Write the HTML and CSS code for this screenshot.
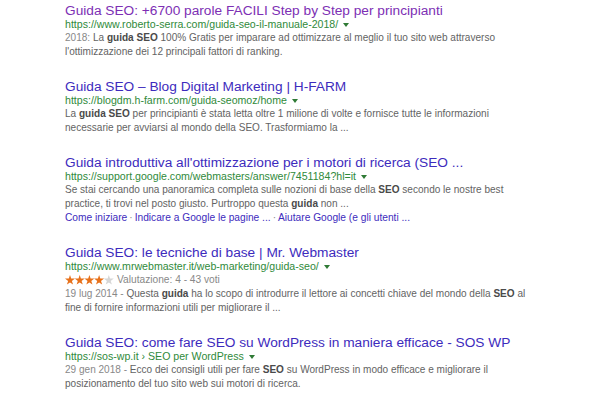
FILE: index.html
```html
<!DOCTYPE html>
<html lang="it">
<head>
    <meta charset="UTF-8">
    <meta name="viewport" content="width=device-width, initial-scale=1.0">
    <title>guida seo - Cerca con Google</title>
    <link rel="stylesheet" href="styles.css">
</head>
<body>
    <div class="results">
        <div class="result">
            <a class="title visited" href="#">Guida SEO: +6700 parole FACILI Step by Step per principianti</a>
            <div class="url">https://www.roberto-serra.com/guida-seo-il-manuale-2018/<span class="arrow"></span></div>
            <p class="snippet"><span class="date">2018:</span> La <b>guida SEO</b> 100% Gratis per imparare ad ottimizzare al meglio il tuo sito web attraverso<br>l'ottimizzazione dei 12 principali fattori di ranking.</p>
        </div>

        <div class="result">
            <a class="title" href="#">Guida SEO – Blog Digital Marketing | H-FARM</a>
            <div class="url">https://blogdm.h-farm.com/guida-seomoz/home<span class="arrow"></span></div>
            <p class="snippet">La <b>guida SEO</b> per principianti è stata letta oltre 1 milione di volte e fornisce tutte le informazioni<br>necessarie per avviarsi al mondo della SEO. Trasformiamo la ...</p>
        </div>

        <div class="result">
            <a class="title" href="#">Guida introduttiva all'ottimizzazione per i motori di ricerca (SEO ...</a>
            <div class="url">https://support.google.com/webmasters/answer/7451184?hl=it<span class="arrow"></span></div>
            <p class="snippet">Se stai cercando una panoramica completa sulle nozioni di base della <b>SEO</b> secondo le nostre best<br>practice, ti trovi nel posto giusto. Purtroppo questa <b>guida</b> non ...</p>
            <div class="sitelinks">
                <a href="#">Come iniziare</a><span class="sep">·</span><a href="#">Indicare a Google le pagine ...</a><span class="sep">·</span><a href="#">Aiutare Google (e gli utenti ...</a>
            </div>
        </div>

        <div class="result">
            <a class="title" href="#">Guida SEO: le tecniche di base | Mr. Webmaster</a>
            <div class="url">https://www.mrwebmaster.it/web-marketing/guida-seo/<span class="arrow"></span></div>
            <div class="rating">
                <svg class="stars" width="49" height="10" viewBox="0 0 49 10">
                    <defs>
                        <polygon id="star" points="5,0 6.2,3.6 10,3.6 6.9,5.9 8.1,9.6 5,7.4 1.9,9.6 3.1,5.9 0,3.6 3.8,3.6"/>
                    </defs>
                    <use href="#star" x="0" fill="#e7711b"/>
                    <use href="#star" x="9.7" fill="#e7711b"/>
                    <use href="#star" x="19.4" fill="#e7711b"/>
                    <use href="#star" x="29.1" fill="#e7711b"/>
                    <use href="#star" x="38.8" fill="#d6d6d6"/>
                </svg>
                Valutazione: 4 - 43 voti
            </div>
            <p class="snippet"><span class="date">19 lug 2014 -</span> Questa <b>guida</b> ha lo scopo di introdurre il lettore ai concetti chiave del mondo della <b>SEO</b> al<br>fine di fornire informazioni utili per migliorare il ...</p>
        </div>

        <div class="result">
            <a class="title" href="#">Guida SEO: come fare SEO su WordPress in maniera efficace - SOS WP</a>
            <div class="url">https://sos-wp.it › SEO per WordPress<span class="arrow"></span></div>
            <p class="snippet"><span class="date">29 gen 2018 -</span> Ecco dei consigli utili per fare <b>SEO</b> su WordPress in modo efficace e migliorare il<br>posizionamento del tuo sito web sui motori di ricerca.</p>
        </div>
    </div>
</body>
</html>
```

FILE: styles.css
```css
body {
    margin: 0;
    font-family: "Liberation Sans", Arial, sans-serif;
    background: #fff;
}
.results {
    padding: 3px 0 0 65px;
    width: 480px;
}
.result {
    margin-bottom: 20px;
}
.title {
    display: block;
    font-size: 13.7px;
    line-height: 15px;
    color: #3d2bbd;
    text-decoration: none;
    white-space: nowrap;
}
.title.visited {
    color: #7d2fb4;
}
.url {
    font-size: 10.6px;
    line-height: 12px;
    color: #2f8a3a;
    white-space: nowrap;
}
.arrow {
    display: inline-block;
    margin-left: 5px;
    vertical-align: middle;
    border-left: 3px solid transparent;
    border-right: 3px solid transparent;
    border-top: 4px solid #2f7a35;
}
.snippet {
    margin: 1px 0 0;
    font-size: 10.05px;
    line-height: 14px;
    color: #636363;
    white-space: nowrap;
}
.snippet b {
    color: #4a4a4a;
}
.date {
    color: #888;
}
.sitelinks {
    font-size: 10.2px;
    line-height: 14px;
    white-space: nowrap;
}
.sitelinks a {
    color: #3d2bbd;
    text-decoration: none;
}
.sep {
    color: #888;
    margin: 0 2px;
}
.rating {
    display: flex;
    align-items: center;
    gap: 3px;
    margin-top: 1px;
    height: 13px;
    font-size: 10.2px;
    color: #888;
}
.stars {
    display: block;
}
```
